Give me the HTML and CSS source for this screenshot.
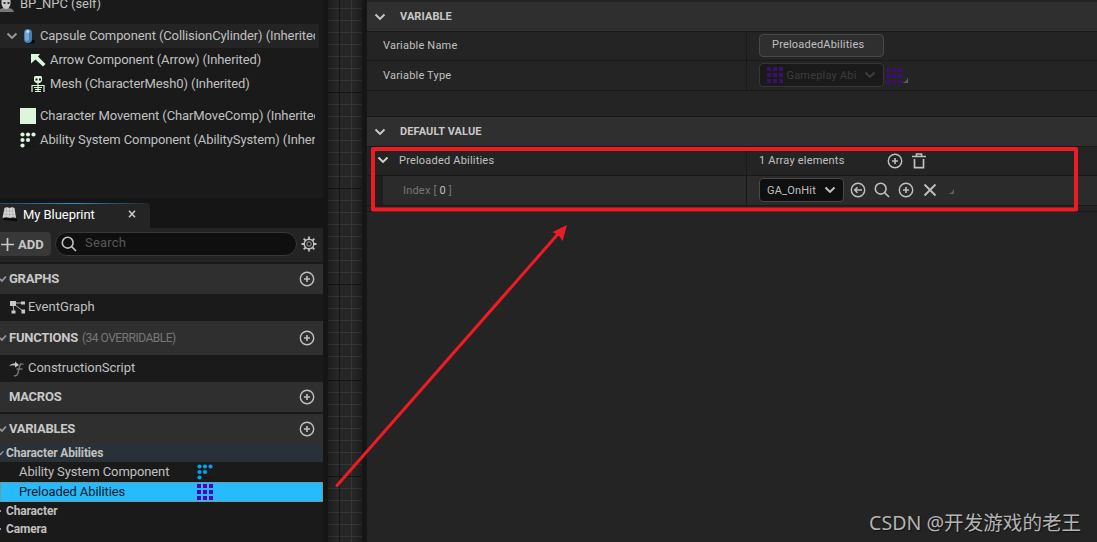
FILE: index.html
```html
<!DOCTYPE html>
<html lang="en">
<head>
    <meta charset="UTF-8">
    <meta name="viewport" content="width=device-width, initial-scale=1.0">
    <title>BP_NPC</title>
    <link rel="stylesheet" href="styles.css">
</head>
<body>
    <!-- Shared icons -->
    <svg class="defs" width="0" height="0">
        <symbol id="plus-circle" viewBox="0 0 16 16"><circle cx="8" cy="8" r="6.7" fill="none" stroke="currentColor" stroke-width="1.4"/><path d="M8 5v6M5 8h6" stroke="currentColor" stroke-width="1.6"/></symbol>
        <symbol id="chevron" viewBox="0 0 12 8"><path d="M1.5 1.5L6 5.9l4.500-4.400" fill="none" stroke="currentColor" stroke-width="2"/></symbol>
        <symbol id="tick" viewBox="0 0 8 8"><path d="M0 4l2 2 4-4.500" fill="none" stroke="currentColor" stroke-width="1.800"/></symbol>
        <symbol id="search" viewBox="0 0 16 16"><circle cx="6.700" cy="6.700" r="5.400" fill="none" stroke="currentColor" stroke-width="1.600"/><path d="M10.500 10.500L15 15" stroke="currentColor" stroke-width="1.700"/></symbol>
        <symbol id="grid" viewBox="0 0 16 16"><path d="M0 0h4v4H0zM6 0h4v4H6zM12 0h4v4h-4zM0 6h4v4H0zM6 6h4v4H6zM12 6h4v4h-4zM0 12h4v4H0zM6 12h4v4H6zM12 12h4v4h-4z" fill="currentColor"/></symbol>
        <symbol id="dots" viewBox="0 0 16 16"><g fill="currentColor"><circle cx="2.500" cy="2.500" r="2.100"/><circle cx="8" cy="2.500" r="2.100"/><circle cx="13.500" cy="2.500" r="2.100"/><circle cx="2.500" cy="8" r="2.100"/><circle cx="8" cy="8" r="2.100"/><circle cx="2.500" cy="13.500" r="2.100"/></g><path d="M6.500 14h3M12 14h3" stroke="#111" stroke-width="1"/></symbol>
        <symbol id="corner" viewBox="0 0 6 6"><path d="M6 0v6H0q5-1 6-6z" fill="currentColor"/></symbol>
    </svg>

    <div class="editor">
        <div class="left">
            <div class="components">
                <div class="tree-row self">
                    <svg class="user-icon" width="14" height="16" viewBox="0 0 14 16"><path d="M-1 16q0-4 5-4h4q5 0 6 4z" fill="#777"/><path d="M1.500 2h9v6q-1 5-4.500 5T1.500 8z" fill="#c8c8c8"/><path d="M3.500 6h2v2h-2zM7.500 6h2v2h-2z" fill="#333"/></svg>
                    <span>BP_NPC (self)</span>
                </div>
                <div class="tree-row capsule">
                    <svg class="tree-arrow" width="12" height="8"><use href="#chevron"/></svg>
                    <svg width="16" height="16" viewBox="0 0 16 16"><ellipse cx="11" cy="13.500" rx="4" ry="2" fill="#080808"/><rect x="4" y="1" width="8" height="14" rx="4" fill="#467eb5"/><rect x="5" y="2" width="4" height="11" rx="2" fill="#75a9d4"/><circle cx="8" cy="3.500" r="1.500" fill="#c5dfe2"/></svg>
                    <span>Capsule Component (CollisionCylinder) (Inherited)</span>
                </div>
                <div class="tree-row child">
                    <svg width="16" height="16" viewBox="0 0 16 16"><path d="M1 2h9L8 4.500 15.500 12l-2.500 2.500L5.500 7.500 1 11.500z" fill="#dcf5dc"/></svg>
                    <span>Arrow Component (Arrow) (Inherited)</span>
                </div>
                <div class="tree-row child">
                    <svg width="16" height="16" viewBox="0 0 16 16"><path d="M5 0h6l1 1v4l-2 2H6L4 5V1z" fill="#dcf5dc"/><path d="M5.500 2.500h2v2h-2zM9 2.500h2v2H9z" fill="#1a1a1a"/><path d="M2 16V9.500h12V16M4 11.500h8M5 13.500h6M5 15.500h6M8 7v9" fill="none" stroke="#dcf5dc" stroke-width="1.200"/></svg>
                    <span>Mesh (CharacterMesh0) (Inherited)</span>
                </div>
                <div class="tree-row comp first">
                    <i class="square"></i>
                    <span>Character Movement (CharMoveComp) (Inherited)</span>
                </div>
                <div class="tree-row comp">
                    <svg class="mint" width="16" height="16"><use href="#dots"/></svg>
                    <span>Ability System Component (AbilitySystem) (Inherited)</span>
                </div>
            </div>

            <div class="tabs">
                <div class="tab">
                    <svg width="16" height="16" viewBox="0 0 16 16"><path d="M2 12l14 1v2l-13-1z" fill="#050505"/><path d="M3.500 2Q6 .5 8.500 2q2.500-1.500 5 0L15 12q-3-1.500-6 0-3.500-1.500-7.500 0z" fill="#d6d6d6"/><path d="M8.500 2v9.500M3 5h10M2.500 8.500h11M5.500 2L5 11M11.500 2l.5 9" stroke="#aaa" stroke-width=".6"/></svg>
                    <span>My Blueprint</span>
                    <svg class="close" width="8" height="8" viewBox="0 0 8 8"><path d="M1 .7l6 6.600M7 .7L1 7.300" stroke="#c8c8c8" stroke-width="1.600"/></svg>
                </div>
            </div>
            <div class="toolbar">
                <button class="add"><svg width="13" height="13" viewBox="0 0 13 13"><path d="M6.500 0v13M0 6.500h13" stroke="currentColor" stroke-width="1.700"/></svg>ADD</button>
                <div class="search"><svg width="16" height="16"><use href="#search"/></svg><span>Search</span></div>
                <svg class="gear" width="16" height="16" viewBox="0 0 16 16"><g fill="none" stroke="currentColor"><circle cx="8" cy="8" r="4.800" stroke-width="1.400"/><circle cx="8" cy="8" r="2.300" stroke-width="1" opacity=".7"/><path d="M8 .5v3M8 12.500v3M.5 8h3M12.500 8h3M2.700 2.700l2 2M11.300 11.300l2 2M2.700 13.300l2-2M11.300 4.700l2-2" stroke-width="1.800"/></g></svg>
            </div>

            <div class="section graphs"><svg class="tick" width="8" height="8"><use href="#tick"/></svg><b>GRAPHS</b><svg class="plus" width="16" height="16"><use href="#plus-circle"/></svg></div>
            <div class="item event">
                <svg width="16" height="14" viewBox="0 0 16 14"><path d="M4 3h9M3 4l1 8M5 5l8 6" fill="none" stroke="#aaa" stroke-width="1"/><path d="M0 1h6v5H0zM11 1.500h4v3h-4zM1.500 10.500h4v3h-4zM11.500 9.500h3.500v4h-3.500z" fill="#c8c8c8"/></svg>
                <span>EventGraph</span>
            </div>
            <div class="section functions"><svg class="tick" width="8" height="8"><use href="#tick"/></svg><b>FUNCTIONS</b><small>(34 OVERRIDABLE)</small><svg class="plus" width="16" height="16"><use href="#plus-circle"/></svg></div>
            <div class="item construct">
                <svg width="16" height="16" viewBox="0 0 16 16"><path d="M0 5q2-3 6-2.500V.5L10 4 6 6.500v-2Q3 4 0 5z" fill="#c8c8c8"/><path d="M14.500 3.500q-3-2-4 2L9 12q-1 3.500-4 2.500M7.500 8h6" fill="none" stroke="#777" stroke-width="1.400"/></svg>
                <span>ConstructionScript</span>
            </div>
            <div class="section macros"><b>MACROS</b><svg class="plus" width="16" height="16"><use href="#plus-circle"/></svg></div>
            <div class="section variables"><svg class="tick" width="8" height="8"><use href="#tick"/></svg><b>VARIABLES</b><svg class="plus" width="16" height="16"><use href="#plus-circle"/></svg></div>
            <div class="category active"><svg class="tick" width="6" height="6"><use href="#tick"/></svg>Character Abilities</div>
            <div class="var"><span>Ability System Component</span><svg class="blue" width="16" height="16"><use href="#dots"/></svg></div>
            <div class="var selected"><span>Preloaded Abilities</span><svg class="purple" width="16" height="16"><use href="#grid"/></svg></div>
            <div class="category closed">Character</div>
            <div class="category closed">Camera</div>
        </div>

        <div class="graph"></div>

        <div class="details">
            <div class="head"><svg width="12" height="8"><use href="#chevron"/></svg><b>VARIABLE</b></div>
            <div class="prop">
                <div class="name">Variable Name</div>
                <div class="value"><div class="input">PreloadedAbilities</div></div>
            </div>
            <div class="prop type">
                <div class="name">Variable Type</div>
                <div class="value">
                    <div class="select disabled"><svg class="purple-dim" width="16" height="16"><use href="#grid"/></svg><span>Gameplay Abi</span><svg width="12" height="8"><use href="#chevron"/></svg></div>
                    <svg class="purple-dim container-type" width="16" height="16"><use href="#grid"/></svg>
                    <svg class="corner" width="6" height="6"><use href="#corner"/></svg>
                </div>
            </div>
            <div class="spacer"></div>
            <div class="head"><svg width="12" height="8"><use href="#chevron"/></svg><b>DEFAULT VALUE</b></div>
            <div class="prop array">
                <div class="name"><svg width="12" height="8"><use href="#chevron"/></svg><span>Preloaded Abilities</span></div>
                <div class="value">
                    <span class="count">1 Array elements</span>
                    <svg width="16" height="16"><use href="#plus-circle"/></svg>
                    <svg width="14" height="16" viewBox="0 0 14 16"><path d="M0 3.500h14M4.500 3V1h5v2M2.500 6v8.700h9V6" fill="none" stroke="currentColor" stroke-width="1.700"/></svg>
                </div>
            </div>
            <div class="prop index">
                <div class="name">Index [ <em>0</em> ]</div>
                <div class="value">
                    <div class="select"><span>GA_OnHit</span><svg width="12" height="8"><use href="#chevron"/></svg></div>
                    <svg width="16" height="16" viewBox="0 0 16 16"><circle cx="8" cy="8" r="6.700" fill="none" stroke="currentColor" stroke-width="1.400"/><path d="M12 8H5M7.500 5.200L4.700 8l2.800 2.800" fill="none" stroke="currentColor" stroke-width="1.500"/></svg>
                    <svg width="16" height="16"><use href="#search"/></svg>
                    <svg width="16" height="16"><use href="#plus-circle"/></svg>
                    <svg width="16" height="16" viewBox="0 0 16 16"><path d="M2.500 2.500l11 11M13.500 2.500l-11 11" stroke="currentColor" stroke-width="1.900"/></svg>
                    <svg class="corner" width="6" height="6"><use href="#corner"/></svg>
                </div>
            </div>
            <div class="end"></div>
        </div>
    </div>

    <!-- Annotation over the panels -->
    <svg class="annotation" width="1097" height="542" viewBox="0 0 1097 542">
        <rect x="373" y="149" width="703" height="60.500" fill="none" stroke="#ed1c24" stroke-width="4" stroke-linejoin="round"/>
        <path d="M337 485.500L558 234" stroke="#ed1c24" stroke-width="3" stroke-linecap="round"/>
        <path d="M567 225l-4.500 16-4-6-6-3z" fill="#ed1c24"/>
    </svg>
    <div class="watermark">CSDN @开发游戏的老王</div>
</body>
</html>
```
FILE: styles.css
```css
* {
    box-sizing: border-box;
}
body {
    margin: 0;
    width: 1097px;
    height: 542px;
    overflow: hidden;
    position: relative;
    background: #151515;
    color: #c0c0c0;
    font-family: Roboto, "Noto Sans CJK SC", sans-serif;
    font-size: 13px;
}
svg {
    display: block;
    flex: none;
}
.defs {
    position: absolute;
}
.editor {
    display: flex;
    height: 542px;
}

/* Left column */
.left {
    width: 323px;
    height: 542px;
    overflow: hidden;
    background: #1a1a1a;
}
.components {
    height: 198px;
    overflow: hidden;
}
.tree-row {
    display: flex;
    align-items: center;
    gap: 4px;
    width: 315px;
    height: 24px;
    overflow: hidden;
    white-space: nowrap;
    letter-spacing: -0.1px;
}
.tree-row span {
    padding-bottom: 2px;
}
.self {
    height: 12px;
    margin-bottom: 12px;
    align-items: flex-end;
    gap: 6px;
    letter-spacing: -0.05px;
}
.self span {
    padding-bottom: 0;
    line-height: 17px;
}
.capsule {
    width: 319px;
    padding-left: 6px;
    background: #242424;
    border-right: 4px solid #242424;
}
.tree-arrow {
    margin-right: -2px;
    color: #999;
}
.child {
    padding-left: 30px;
}
.comp {
    padding-left: 20px;
}
.first {
    margin-top: 8px;
}
.square {
    flex: none;
    width: 16px;
    height: 16px;
    background: #dcf5dc;
}
.mint {
    color: #dcf5dc;
}
.tabs {
    height: 30px;
    padding-top: 5px;
    background: #151515;
}
.tab {
    display: flex;
    align-items: center;
    width: 150px;
    height: 25px;
    padding-left: 1px;
    padding-bottom: 3px;
    border-radius: 0 4px 0 0;
    background:
        linear-gradient(to right, #20496a, #2391d0 50%, #242424) 0 0 / 100% 1px no-repeat,
        #242424;
    color: #fff;
    letter-spacing: -0.05px;
}
.tab span {
    margin-left: 6px;
}
.close {
    margin-left: auto;
    margin-right: 14px;
}
.toolbar {
    display: flex;
    align-items: center;
    height: 34px;
    padding-bottom: 2px;
    background: #242424;
}
.add {
    display: flex;
    align-items: center;
    gap: 4px;
    width: 51px;
    height: 24px;
    margin: 0;
    padding: 0 0 0 1px;
    border: 0;
    border-radius: 0 4px 4px 0;
    background: #383838;
    color: #c8c8c8;
    font: bold 13px Roboto, sans-serif;
}
.search {
    display: flex;
    align-items: center;
    gap: 8px;
    width: 242px;
    height: 24px;
    margin-left: 4px;
    padding-left: 5px;
    border: 1px solid #383838;
    border-radius: 12px;
    background: #0f0f0f;
}
.search span {
    color: #575757;
    letter-spacing: 0.2px;
    line-height: 20px;
    padding-bottom: 2px;
}
.gear {
    margin-left: 4px;
    color: #c0c0c0;
}
.section {
    display: flex;
    align-items: center;
    height: 30px;
    padding-left: 9px;
    position: relative;
    background: #2f2f2f;
    color: #c8c8c8;
}
.section b {
    padding-bottom: 1px;
    letter-spacing: -0.25px;
}
.section small {
    margin-left: 4px;
    color: #777;
    font-size: 12px;
    letter-spacing: -0.5px;
}
.tick {
    position: absolute;
    left: 0;
    color: #999;
}
.plus {
    margin-left: auto;
    margin-right: 8px;
    color: #c0c0c0;
}
.graphs {
    margin-top: 2px;
}
.functions {
    height: 34px;
}
.variables {
    margin-top: 2px;
}
.item {
    display: flex;
    align-items: center;
    gap: 3px;
    height: 27px;
    padding-left: 9px;
}
.item span {
    padding-bottom: 2px;
}
.event {
    padding-left: 10px;
    gap: 2px;
    padding-bottom: 1px;
    letter-spacing: 0.05px;
}
.construct {
    letter-spacing: -0.05px;
}
.category {
    position: relative;
    height: 18px;
    padding-left: 6px;
    font-size: 12px;
    font-weight: bold;
    line-height: 18px;
    letter-spacing: -0.15px;
}
.category .tick {
    left: -1px;
    top: 6px;
}
.active {
    background: #2a3038;
}
.closed::before {
    content: "";
    position: absolute;
    left: 0;
    top: 8px;
    width: 1px;
    height: 2px;
    background: #999;
}
.var {
    display: flex;
    align-items: center;
    height: 20px;
    padding-left: 19px;
    letter-spacing: -0.1px;
}
.var span {
    width: 178px;
    padding-bottom: 2px;
}
.selected {
    background: #26bbff;
    color: #101820;
    outline: 1px dotted #b08030;
    outline-offset: -1px;
}
.blue {
    color: #00a2f2;
}
.purple {
    color: #5800b8;
}
.purple-dim {
    color: #3b1068;
}

/* Strip of the node graph */
.graph {
    width: 34px;
    margin: 0 5px;
    background:
        linear-gradient(to right, rgba(0, 0, 0, 0.25), transparent 10px, transparent 26px, rgba(0, 0, 0, 0.25)),
        linear-gradient(#151515, #151515) 11px 0 / 1px 100% no-repeat,
        repeating-linear-gradient(transparent 0 92px, #151515 92px 93px, transparent 93px 96px),
        linear-gradient(#363636, #363636) 23px 0 / 1px 100% no-repeat,
        repeating-linear-gradient(transparent 0 8px, #363636 8px 9px, transparent 9px 12px),
        #262626;
}

/* Details panel */
.details {
    flex: 1;
    padding-top: 2px;
    background: #242424;
    font-size: 11px;
    letter-spacing: 0.2px;
}
.head {
    display: flex;
    align-items: center;
    gap: 14px;
    height: 30px;
    padding-left: 7px;
    background: #2f2f2f;
    border-bottom: 1px solid #191919;
    color: #c8c8c8;
    letter-spacing: 0.1px;
}
.prop {
    display: flex;
    height: 29px;
    border-bottom: 1px solid #191919;
}
.type {
    height: 30px;
}
.name {
    display: flex;
    align-items: center;
    width: 380px;
    padding-left: 16px;
    padding-bottom: 2px;
    border-right: 1px solid #191919;
}
.type .name {
    padding-bottom: 0;
}
.value {
    display: flex;
    align-items: center;
    padding-left: 12px;
}
.input {
    width: 125px;
    height: 23px;
    margin-bottom: 1px;
    padding-left: 12px;
    border: 1px solid #484848;
    border-radius: 4px;
    background: #2f2f2f;
    line-height: 19px;
}
.select {
    display: flex;
    align-items: center;
    justify-content: space-between;
    width: 85px;
    height: 24px;
    padding: 0 7px;
    border: 1px solid #484848;
    border-radius: 4px;
    background: #0f0f0f;
}
.disabled {
    width: 125px;
    margin-bottom: 1px;
    background: #1a1a1a;
    border-color: #363636;
    color: #3d3d3d;
}
.disabled span {
    margin-right: 4px;
}
.container-type {
    margin-left: 2px;
}
.corner {
    align-self: flex-end;
    margin-bottom: 7px;
    color: #606060;
}
.spacer {
    height: 26px;
    border-bottom: 1px solid #191919;
}
.array .name {
    padding-left: 10px;
    gap: 10px;
}
.array .name svg {
    color: #d0d0d0;
}
.count {
    width: 128px;
    padding-bottom: 2px;
}
.array .value svg + svg {
    margin-left: 9px;
}
.index {
    height: 30px;
    background: linear-gradient(to right, #242424, #1d1d1d 16px, #2b2b2b 16px);
}
.index .name {
    padding-left: 36px;
    padding-bottom: 0;
    color: #777;
    white-space: pre;
}
.index em {
    color: #c0c0c0;
    font-style: normal;
}
.index .value {
    gap: 8px;
    padding-bottom: 1px;
}
.index .select {
    margin-right: -2px;
}
.index .corner {
    margin-left: 2px;
    margin-bottom: 10px;
}
.end {
    height: 6px;
    border-bottom: 1px solid #191919;
}

.annotation {
    position: absolute;
    left: 0;
    top: 0;
}
.watermark {
    position: absolute;
    left: 869px;
    top: 509px;
    color: #b4b4b4;
    font-family: "Noto Sans", "Noto Sans CJK SC", sans-serif;
    font-size: 19.6px;
    line-height: 28px;
    white-space: nowrap;
    text-shadow: 1px 1px 1px #111;
}
```
